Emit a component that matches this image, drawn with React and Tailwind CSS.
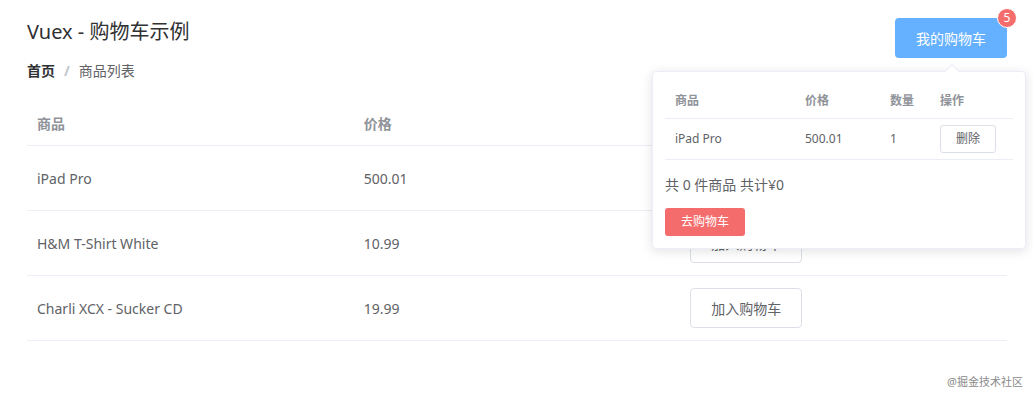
// Vuex shopping cart demo — product list with cart popover
const products = [
  { title: 'iPad Pro', price: '500.01' },
  { title: 'H&M T-Shirt White', price: '10.99' },
  { title: 'Charli XCX - Sucker CD', price: '19.99' },
];

const cartItems = [{ title: 'iPad Pro', price: '500.01', quantity: 1 }];

function CartPopover() {
  return (
    <div className="absolute left-[-243px] top-[53px] z-10 w-[374px] rounded-[4px] border border-[#ebeef5] bg-white p-3 shadow-[0_2px_12px_0_rgba(0,0,0,0.12)]">
      {/* arrow */}
      <div className="absolute left-[294px] top-[-6px] h-[10px] w-[10px] rotate-45 border-l border-t border-[#ebeef5] bg-white" />
      <div className="text-[12px]">
        <div className="grid h-[35px] grid-cols-[130px_85px_50px_85px] items-center border-b border-[#ebeef5] font-bold text-[#909399]">
          <div className="pl-[10px]">商品</div>
          <div className="pl-[10px]">价格</div>
          <div className="pl-[10px]">数量</div>
          <div className="pl-[10px]">操作</div>
        </div>
        {cartItems.map((item) => (
          <div
            key={item.title}
            className="grid h-[41px] grid-cols-[130px_85px_50px_85px] items-center border-b border-[#ebeef5] text-[#606266]"
          >
            <div className="pl-[10px]">{item.title}</div>
            <div className="pl-[10px]">{item.price}</div>
            <div className="pl-[10px]">{item.quantity}</div>
            <div className="pl-[10px]">
              <button className="h-[28px] rounded-[3px] border border-[#dcdfe6] bg-white px-[15px] text-[12px] leading-none text-[#606266]">
                删除
              </button>
            </div>
          </div>
        ))}
      </div>
      <div className="mt-[16px] text-[14px] leading-[18px] text-[#606266]">共 0 件商品 共计¥0</div>
      <button className="mt-[14px] h-[28px] rounded-[3px] bg-[#f56c6c] px-[16px] text-[12px] leading-none text-white">
        去购物车
      </button>
    </div>
  );
}

export default function App() {
  return (
    <div
      className="relative h-[397px] w-[1033px] overflow-hidden bg-white pl-[27px] pr-[26px] pt-[18px]"
      style={{ fontFamily: '"Noto Sans", "Noto Sans CJK SC", sans-serif' }}
    >
      {/* header */}
      <div className="flex items-start justify-between">
        <h1 className="text-[20px] leading-[28px] text-[#303133]">Vuex - 购物车示例</h1>
        <div className="relative">
          <button className="h-[40px] w-[112px] rounded-[4px] bg-[#66b1ff] text-[14px] text-white">我的购物车</button>
          <span className="absolute right-[-10px] top-[-10px] flex h-[20px] min-w-[20px] items-center justify-center rounded-full border border-white bg-[#f56c6c] px-[5px] text-[12px] leading-none text-white">
            5
          </span>
          <CartPopover />
        </div>
      </div>

      {/* breadcrumb */}
      <div className="mt-[6px] flex items-center text-[14px] leading-[14px]">
        <span className="font-bold text-[#303133]">首页</span>
        <span className="mx-[9px] font-bold text-[#c0c4cc]">/</span>
        <span className="text-[#606266]">商品列表</span>
      </div>

      {/* product table */}
      <div className="mt-[23px] text-[14px]">
        <div className="grid h-[45px] grid-cols-3 items-center border-b border-[#ebeef5] font-bold text-[#909399]">
          <div className="pl-[10px]">商品</div>
          <div className="pl-[10px]">价格</div>
          <div className="pl-[10px]" />
        </div>
        {products.map((p) => (
          <div key={p.title} className="grid h-[65px] grid-cols-3 items-center border-b border-[#ebeef5] text-[#606266]">
            <div className="pl-[10px]">{p.title}</div>
            <div className="pl-[10px]">{p.price}</div>
            <div className="pl-[10px]">
              <button className="h-[40px] w-[112px] rounded-[4px] border border-[#dcdfe6] bg-white text-[14px] text-[#606266]">
                加入购物车
              </button>
            </div>
          </div>
        ))}
      </div>

      {/* watermark */}
      <div className="absolute bottom-[7px] right-[10px] text-[11px] text-[#8a8a8a]">@掘金技术社区</div>
    </div>
  );
}
